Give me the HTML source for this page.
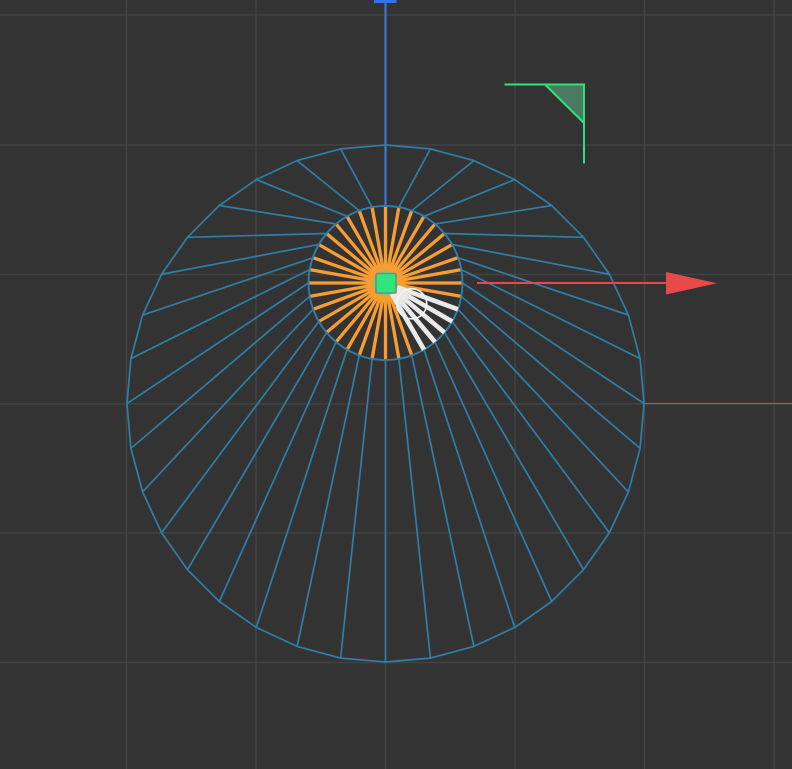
<!DOCTYPE html>
<html>
<head>
<meta charset="utf-8">
<title>Viewport</title>
<style>
html,body{margin:0;padding:0;background:#333;width:792px;height:769px;overflow:hidden}
svg{display:block}
</style>
</head>
<body>
<svg width="792" height="769" viewBox="0 0 792 769" xmlns="http://www.w3.org/2000/svg">
<rect width="792" height="769" fill="#333333"/>
<!-- grid -->
<path d="M126.5 0V769M256 0V769M385.5 0V769M515 0V769M644.5 0V769M774 0V769M0 15H792M0 145H792M0 274.500H792M0 404H792M0 533H792M0 662.500H792" stroke="#434343" stroke-width="1.500" fill="none"/>
<!-- dim x axis -->
<path d="M644 403.500H792" stroke="#a5575c" stroke-width="1.200" fill="none"/>
<!-- blue axis -->
<path d="M385.500 0V206" stroke="#3a76d6" stroke-width="2.200" fill="none"/>
<path d="M374 0H396.500V3H374Z" fill="#2f74e8"/>
<!-- blue spokes -->
<path fill="none" stroke="#2f7ea8" stroke-width="1.700" stroke-linejoin="round" d="
M430.4 148.9L398.9 207.2M473.9 160.6L411.8 210.6M514.75 179.6L424 216.3M551.7 205.5L435 224M583.5 237.3L444.5 233.5M609.4 274.25L452.2 244.5M628.4 315.1L457.9 257.7M640.1 358.6L461.3 269.6M644 403.5L462.5 283M640.1 448.4L461.3 296.4M628.4 491.9L457.9 309.3M609.4 532.75L452.2 321.5M583.5 569.7L444.5 332.5M551.7 601.5L435 342M514.75 627.4L424 349.7M473.9 646.4L411.8 355.4M430.4 658.1L398.9 358.8M385.5 662L385.5 360
M340.6 658.1L372.1 358.8M297.1 646.4L359.2 355.4M256.25 627.4L347 349.7M219.3 601.5L336 342M187.5 569.7L326.5 332.5M161.6 532.75L318.8 321.5M142.6 491.9L313.1 309.3M130.9 448.4L309.7 296.4M127 403.5L308.5 283M130.9 358.6L309.7 269.6M142.6 315.1L313.1 257.7M161.6 274.25L318.8 244.5M187.5 237.3L326.5 233.5M219.3 205.5L336 224M256.25 179.6L347 216.3M297.1 160.6L359.2 210.6M340.6 148.9L372.1 207.2
M385.5 145L430.4 148.9L473.9 160.6L514.75 179.6L551.7 205.5L583.5 237.3L609.4 274.25L628.4 315.1L640.1 358.6L644 403.5L640.1 448.4L628.4 491.9L609.4 532.75L583.5 569.7L551.7 601.5L514.75 627.4L473.9 646.4L430.4 658.1L385.5 662L340.6 658.1L297.1 646.4L256.25 627.4L219.3 601.5L187.5 569.7L161.6 532.75L142.6 491.9L130.9 448.4L127 403.5L130.9 358.6L142.6 315.1L161.6 274.25L187.5 237.3L219.3 205.5L256.25 179.6L297.1 160.6L340.6 148.9Z"/>
<!-- orange spokes -->
<path fill="none" stroke="#f79d32" stroke-width="3.300" d="
M385.5 283L385.5 206M385.5 283L398.9 207.2M385.5 283L411.8 210.6M385.5 283L424 216.3M385.5 283L435 224M385.5 283L444.5 233.5M385.5 283L452.2 244.5M385.5 283L457.9 257.7M385.5 283L461.3 269.6M385.5 283L462.5 283M385.5 283L461.3 296.4
M385.5 283L411.8 355.4M385.5 283L398.9 358.8M385.5 283L385.5 360M385.5 283L372.1 358.8M385.5 283L359.2 355.4M385.5 283L347 349.7M385.5 283L336 342M385.5 283L326.5 332.5M385.5 283L318.8 321.5M385.5 283L313.1 309.3M385.5 283L309.7 296.4M385.5 283L308.5 283M385.5 283L309.7 269.6M385.5 283L313.1 257.7M385.5 283L318.8 244.5M385.5 283L326.5 233.5M385.5 283L336 224M385.5 283L347 216.3M385.5 283L359.2 210.6M385.5 283L372.1 207.2"/>
<circle cx="385.500" cy="283" r="18" fill="#f79d32"/>
<!-- inner ring -->
<circle cx="385.500" cy="283" r="77" fill="none" stroke="#2f7ea8" stroke-width="1.900"/>
<!-- white selected spokes -->
<path fill="none" stroke="#e9e9e9" stroke-width="4.700" d="M385.500 283L457.9 309.300M385.500 283L452.200 321.500M385.500 283L444.500 332.500M385.500 283L435 342M385.500 283L424 349.700"/>
<circle cx="411.700" cy="303.800" r="15" fill="none" stroke="#f5f5f5" stroke-width="1.600"/>
<!-- center handle -->
<circle cx="385.500" cy="283" r="12.500" fill="#6fd07a"/>
<rect x="376" y="273.500" width="20" height="19.500" rx="1" fill="#2ee67e" stroke="#7d877a" stroke-width="1.600"/>
<!-- red axis -->
<path d="M477 283H668" stroke="#e5484d" stroke-width="2" fill="none"/>
<path d="M666 272L717 283.300L666 294.500Z" fill="#e84a4a"/>
<!-- green corner gizmo -->
<path d="M545 84.500H584V123Z" fill="#4a7a5f"/>
<path d="M504.500 84.500H584V163.500M545 84.500L584 123" fill="none" stroke="#2fe07c" stroke-width="2"/>
</svg>
</body>
</html>
